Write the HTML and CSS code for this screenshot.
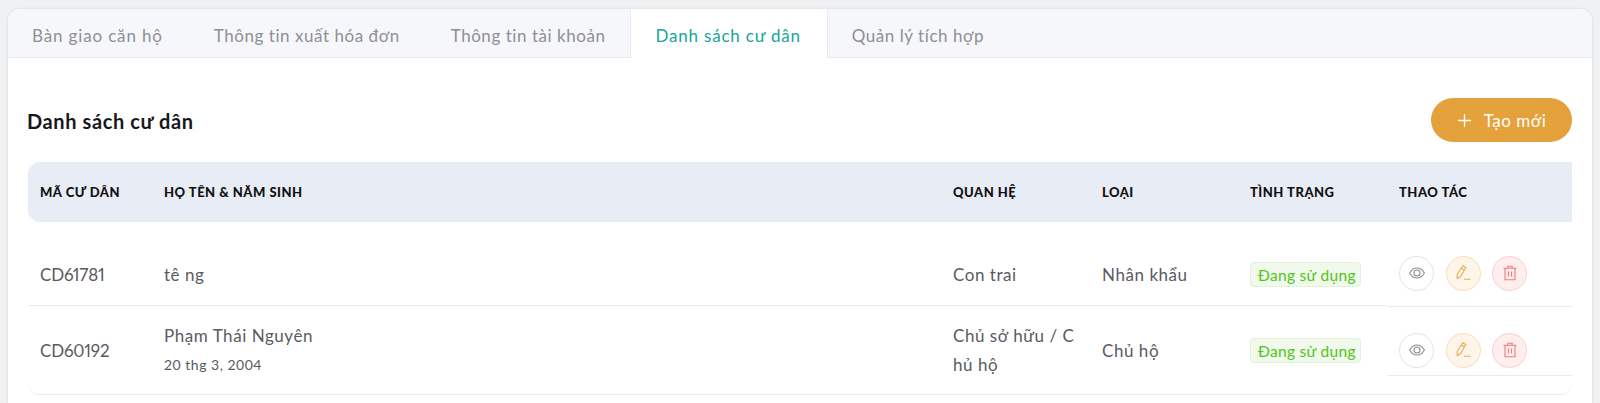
FILE: index.html
```html
<!DOCTYPE html>
<html lang="vi">
<head>
<meta charset="utf-8">
<title>Danh sách cư dân</title>
<link rel="stylesheet" href="styles.css">
</head>
<body>
<main class="card">
  <nav class="tabs">
    <a class="tab">Bàn giao căn hộ</a>
    <a class="tab">Thông tin xuất hóa đơn</a>
    <a class="tab tab-before">Thông tin tài khoản</a>
    <a class="tab active">Danh sách cư dân</a>
    <a class="tab tab-after">Quản lý tích hợp</a>
  </nav>
  <section class="content">
    <header class="head">
      <h2 class="title">Danh sách cư dân</h2>
      <button class="create"><svg class="plus" viewBox="0 0 16 16"><path d="M8 1v14M1 8h14"/></svg>Tạo mới</button>
    </header>
    <table class="table">
      <colgroup>
        <col class="c1"><col class="c2"><col class="c3"><col class="c4"><col class="c5"><col class="c6">
      </colgroup>
      <thead>
        <tr><th>MÃ CƯ DÂN</th><th>HỌ TÊN &amp; NĂM SINH</th><th>QUAN HỆ</th><th>LOẠI</th><th>TÌNH TRẠNG</th><th>THAO TÁC</th></tr>
      </thead>
      <tbody>
        <tr class="r1">
          <td class="code">CD61781</td>
          <td>tê ng</td>
          <td>Con trai</td>
          <td>Nhân khẩu</td>
          <td><span class="status">Đang sử dụng</span></td>
          <td class="actions-cell"><div class="actions">
            <button class="act view"><svg viewBox="0 0 16 16"><path d="M.6 8c1.900-3.400 4.400-5 7.400-5s5.500 1.600 7.400 5c-1.900 3.400-4.400 5-7.400 5S2.500 11.400.6 8z"/><circle cx="8" cy="8" r="3"/></svg></button>
            <button class="act edit"><svg viewBox="0 0 16 16"><path d="M7.800.8l3 1.700-5.200 9-3.300 2-.2-3.700zM6.400 3.200l3 1.700M9 14.200h6.500"/></svg></button>
            <button class="act del"><svg viewBox="0 0 16 16"><path d="M1.500 3.300h13M5.800 3.300V1.300h4.400v2M3 3.300v11.400h10V3.300M6.500 6.500v5M9.500 6.500v5"/></svg></button>
          </div></td>
        </tr>
        <tr class="r2">
          <td class="code">CD60192</td>
          <td><div class="name">Phạm Thái Nguyên</div><div class="dob">20 thg 3, 2004</div></td>
          <td class="wrap">Chủ sở hữu / Chủ hộ</td>
          <td>Chủ hộ</td>
          <td><span class="status">Đang sử dụng</span></td>
          <td class="actions-cell"><div class="actions">
            <button class="act view"><svg viewBox="0 0 16 16"><path d="M.6 8c1.900-3.400 4.400-5 7.400-5s5.500 1.600 7.400 5c-1.900 3.400-4.400 5-7.400 5S2.500 11.400.6 8z"/><circle cx="8" cy="8" r="3"/></svg></button>
            <button class="act edit"><svg viewBox="0 0 16 16"><path d="M7.800.8l3 1.700-5.200 9-3.300 2-.2-3.700zM6.400 3.200l3 1.700M9 14.200h6.500"/></svg></button>
            <button class="act del"><svg viewBox="0 0 16 16"><path d="M1.500 3.300h13M5.800 3.300V1.300h4.400v2M3 3.300v11.400h10V3.300M6.500 6.500v5M9.500 6.500v5"/></svg></button>
          </div></td>
        </tr>
      </tbody>
    </table>
  </section>
</main>
</body>
</html>
```

FILE: styles.css
```css
* { box-sizing: border-box; }
html, body { margin: 0; height: 403px; overflow: hidden; }
body {
  background: #f0f1f3;
  padding: 9px 8px 0;
  font-family: "Lato", "Noto Sans", sans-serif;
  color: #5a5a5f;
}
.card {
  background: #fff;
  border-radius: 12px 12px 0 0;
  height: 394px;
  box-shadow: 0 0 3px rgba(0, 0, 0, .12);
  overflow: hidden;
}
.tabs {
  display: flex;
  height: 49px;
  background: #f5f7fb;
  border-bottom: 1px solid #e9ebf2;
}
.tab {
  height: 49px;
  padding: 5px 26px 0 25px;
  line-height: 44px;
  font-size: 17px;
  letter-spacing: .55px;
  color: #8f8f94;
}
.tab:first-child { padding-left: 24px; letter-spacing: .85px; }
.tab-before { padding-right: 24px; }
.tab-after { padding-left: 24px; }
.tab.active {
  color: #1aa39a;
  background: #fff;
  letter-spacing: .8px;
  border-left: 1px solid #e9ebf2;
  border-right: 1px solid #e9ebf2;
}
.content { padding: 40px 20px 0; }
.head {
  display: flex;
  justify-content: space-between;
  align-items: center;
  height: 44px;
}
.title { margin: 2px 0 0 -1px; font-size: 20px; font-weight: 700; letter-spacing: .6px; color: #17171c; }
.create {
  display: flex;
  align-items: center;
  justify-content: center;
  gap: 12px;
  width: 141px;
  height: 44px;
  border: 0;
  border-radius: 22px;
  background: #e5a23c;
  color: #fff;
  font: 400 17px "Lato", sans-serif;
  letter-spacing: .5px;
}
.plus { width: 15px; height: 15px; fill: none; stroke: #fff; stroke-width: 1.400; }
.table {
  width: 100%;
  margin-top: 20px;
  border-collapse: separate;
  border-spacing: 0;
  table-layout: fixed;
}
.c1 { width: 124px; }
.c2 { width: 789px; }
.c3 { width: 149px; }
.c4 { width: 148px; }
.c5 { width: 149px; }
th {
  height: 60px;
  padding: 0 12px;
  background: #e8ecf5;
  text-align: left;
  font-size: 13px;
  font-weight: 900;
  letter-spacing: .5px;
  color: #111;
}
th:first-child { border-radius: 12px 0 0 12px; }
td {
  padding: 0 12px;
  font-size: 17px;
  letter-spacing: .55px;
  border-bottom: 1px solid #e9ebf2;
}
.r1 td { height: 84px; padding-top: 22px; }
.r2 td { height: 89px; }
.r2 td:first-child { border-bottom-left-radius: 12px; }
.r2 td:last-child { border-bottom-right-radius: 12px; }
.code { font-variant-numeric: proportional-nums; letter-spacing: -.2px; }
.wrap { word-break: break-all; line-height: 29px; }
.name { line-height: 29px; }
.dob { font-size: 14px; line-height: 29px; letter-spacing: .5px; }
.status {
  display: inline-block;
  padding: 0 4px 0 7px;
  height: 25px;
  line-height: 24px;
  font-size: 15.500px;
  letter-spacing: .3px;
  color: #52c41a;
  background: #f0f9eb;
  border: 1px solid #e1f3d8;
  border-radius: 4px;
  white-space: nowrap;
}
.r1 td.actions-cell, .r2 td.actions-cell { padding: 0; vertical-align: top; }
.r1 td.actions-cell { border-bottom: 0; }
.actions { display: flex; gap: 11.700px; padding: 18px 12px 0; align-items: center; }
.r1 .actions { height: 84px; }
.r2 .actions { height: 70px; border-top: 1px solid #e9ebf2; border-bottom: 1px solid #e9ebf2; }
.act {
  display: flex;
  align-items: center;
  justify-content: center;
  width: 35px;
  height: 35px;
  padding: 0;
  border-radius: 50%;
  border: 1px solid;
  background: #fff;
}
.act svg { width: 16px; height: 16px; fill: none; stroke-width: 1.100; }
.view { border-color: #e4e5ec; }
.view svg { stroke: #8e8e93; }
.edit { border-color: #f8dfb9; background: #fdf5e9; }
.edit svg { stroke: #e8ad5a; }
.del { border-color: #fdcdcd; background: #feeeee; }
.del svg { stroke: #f4777c; }
```
